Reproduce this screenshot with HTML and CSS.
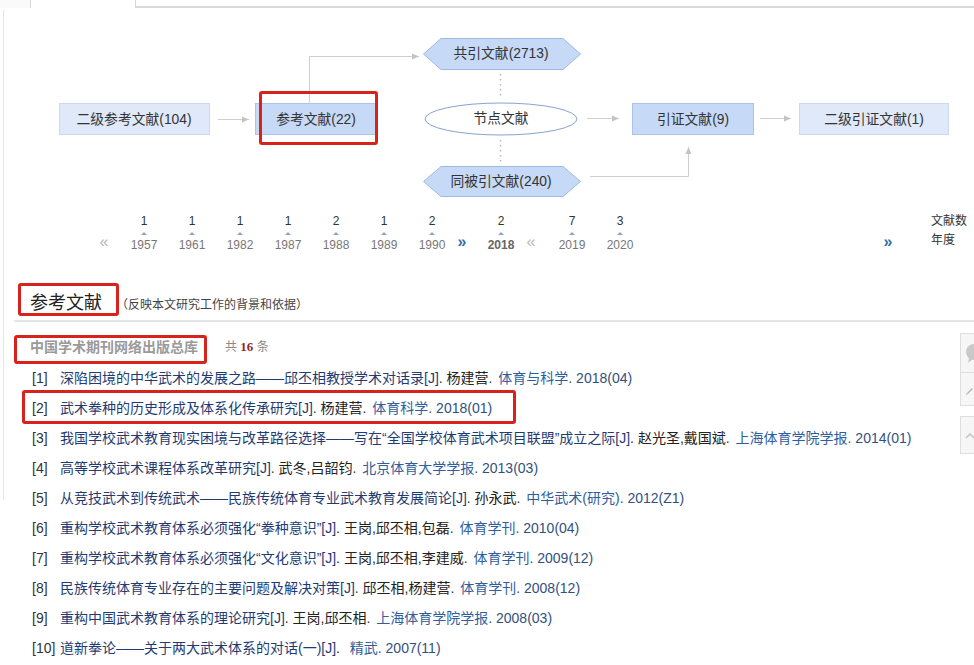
FILE: index.html
```html
<!DOCTYPE html>
<html lang="zh-CN">
<head>
<meta charset="utf-8">
<title>参考文献</title>
<link rel="stylesheet" href="styles.css">
</head>
<body>
<div class="page">
  <div class="tabs">
    <div class="tab-left"></div>
    <div class="tab-active"></div>
    <div class="tab-rest"></div>
  </div>
  <div class="left-edge"></div>

  <div class="diagram">
    <svg class="diagram-svg" width="974" height="197" viewBox="0 8 974 197">
      <defs>
        <marker id="ah" markerWidth="8" markerHeight="8" refX="7" refY="4" orient="auto" markerUnits="userSpaceOnUse">
          <path d="M0,1 L7,4 L0,7 Z" fill="#c4c4c4"/>
        </marker>
      </defs>
      <g fill="none" stroke="#cfcfcf" stroke-width="1">
        <line x1="218" y1="119.5" x2="249" y2="119.5" marker-end="url(#ah)"/>
        <polyline points="309.5,103 309.5,56.5 419,56.5" marker-end="url(#ah)"/>
        <line x1="587" y1="118.5" x2="619" y2="118.5" marker-end="url(#ah)"/>
        <line x1="760" y1="118.5" x2="791" y2="118.5" marker-end="url(#ah)"/>
        <polyline points="590,176.5 688.5,176.5 688.5,147" marker-end="url(#ah)"/>
      </g>
      <g stroke="#b9b9b9" stroke-width="1.5" stroke-dasharray="1.5 3.5">
        <line x1="500.5" y1="74" x2="500.5" y2="98"/>
        <line x1="500.5" y1="140" x2="500.5" y2="163"/>
      </g>
      <rect x="59.5" y="103.5" width="150" height="31" fill="#dfe9fa" stroke="#cbd9f0"/>
      <rect x="255.5" y="103.5" width="121" height="31" fill="#c6d9f6" stroke="#adc4ea"/>
      <polygon points="423.5,54 441,38.5 563,38.5 580.5,54 563,69.5 441,69.5" fill="#c6d9f6" stroke="#9fb9e2"/>
      <ellipse cx="501" cy="119" rx="76" ry="16" fill="#ffffff" stroke="#86a3cf"/>
      <rect x="632.5" y="103.5" width="121" height="31" fill="#c6d9f6" stroke="#adc4ea"/>
      <rect x="799.5" y="103.5" width="149" height="31" fill="#dfe9fa" stroke="#cbd9f0"/>
      <polygon points="423.5,181.5 441,166.5 563,166.5 580.5,181.5 563,196.5 441,196.5" fill="#c6d9f6" stroke="#9fb9e2"/>
      <g class="node-text" text-anchor="middle">
        <text x="134" y="124">二级参考文献(104)</text>
        <text x="316" y="124">参考文献(22)</text>
        <text x="501" y="58">共引文献(2713)</text>
        <text x="501" y="123">节点文献</text>
        <text x="693" y="124">引证文献(9)</text>
        <text x="874" y="124">二级引证文献(1)</text>
        <text x="501" y="186">同被引文献(240)</text>
      </g>
    </svg>
  </div>

  <div class="timeline">
    <span class="nav nav-prev first">«</span>
    <div class="year-col first-col"><span class="cnt">1</span><i class="tri"></i><span class="yr">1957</span></div>
    <div class="year-col"><span class="cnt">1</span><i class="tri"></i><span class="yr">1961</span></div>
    <div class="year-col"><span class="cnt">1</span><i class="tri"></i><span class="yr">1982</span></div>
    <div class="year-col"><span class="cnt">1</span><i class="tri"></i><span class="yr">1987</span></div>
    <div class="year-col"><span class="cnt">2</span><i class="tri"></i><span class="yr">1988</span></div>
    <div class="year-col"><span class="cnt">1</span><i class="tri"></i><span class="yr">1989</span></div>
    <div class="year-col"><span class="cnt">2</span><i class="tri"></i><span class="yr">1990</span></div>
    <span class="nav nav-next">»</span>
    <div class="year-col col-2018"><span class="cnt">2</span><i class="tri"></i><span class="yr bold">2018</span></div>
    <span class="nav nav-prev mid">«</span>
    <div class="year-col col-2019"><span class="cnt">7</span><i class="tri"></i><span class="yr">2019</span></div>
    <div class="year-col"><span class="cnt">3</span><i class="tri"></i><span class="yr">2020</span></div>
    <span class="nav nav-next end">»</span>
    <div class="legend"><span>文献数</span><span>年度</span></div>
  </div>

  <div class="section-head">
    <h2>参考文献</h2>
    <span class="sub">（反映本文研究工作的背景和依据）</span>
  </div>

  <div class="db-row">
    <span class="db-name">中国学术期刊网络出版总库</span>
    <span class="db-count">共 <b>16</b> 条</span>
  </div>

  <ol class="refs">
    <li><span class="no">[1]</span><span class="t">深陷困境的中华武术的发展之路——邱丕相教授学术对话录[J]</span>. <span class="a">杨建营</span>. <span class="j">体育与科学</span><span class="y">. 2018(04)</span></li>
    <li><span class="no">[2]</span><span class="t">武术拳种的历史形成及体系化传承研究[J]</span>. <span class="a">杨建营</span>. <span class="j">体育科学</span><span class="y">. 2018(01)</span></li>
    <li><span class="no">[3]</span><span class="t">我国学校武术教育现实困境与改革路径选择——写在“全国学校体育武术项目联盟”成立之际[J]</span>. <span class="a">赵光圣,戴国斌</span>. <span class="j">上海体育学院学报</span><span class="y">. 2014(01)</span></li>
    <li><span class="no">[4]</span><span class="t">高等学校武术课程体系改革研究[J]</span>. <span class="a">武冬,吕韶钧</span>. <span class="j">北京体育大学学报</span><span class="y">. 2013(03)</span></li>
    <li><span class="no">[5]</span><span class="t">从竞技武术到传统武术——民族传统体育专业武术教育发展简论[J]</span>. <span class="a">孙永武</span>. <span class="j">中华武术(研究)</span><span class="y">. 2012(Z1)</span></li>
    <li><span class="no">[6]</span><span class="t">重构学校武术教育体系必须强化“拳种意识”[J]</span>. <span class="a">王岗,邱丕相,包磊</span>. <span class="j">体育学刊</span><span class="y">. 2010(04)</span></li>
    <li><span class="no">[7]</span><span class="t">重构学校武术教育体系必须强化“文化意识”[J]</span>. <span class="a">王岗,邱丕相,李建威</span>. <span class="j">体育学刊</span><span class="y">. 2009(12)</span></li>
    <li><span class="no">[8]</span><span class="t">民族传统体育专业存在的主要问题及解决对策[J]</span>. <span class="a">邱丕相,杨建营</span>. <span class="j">体育学刊</span><span class="y">. 2008(12)</span></li>
    <li><span class="no">[9]</span><span class="t">重构中国武术教育体系的理论研究[J]</span>. <span class="a">王岗,邱丕相</span>. <span class="j">上海体育学院学报</span><span class="y">. 2008(03)</span></li>
    <li><span class="no">[10]</span><span class="t">道新拳论——关于两大武术体系的对话(一)[J]</span>. &nbsp;<span class="j">精武</span><span class="y">. 2007(11)</span></li>
  </ol>

  <div class="side-tools">
    <div class="tool tool-a"><svg width="14" height="22" viewBox="0 0 14 22"><circle cx="11" cy="10" r="8" fill="#c9c9c9"/><path d="M6,16 L5,21 L10,17 Z" fill="#c9c9c9"/></svg></div>
    <div class="tool tool-b"><svg width="14" height="14" viewBox="0 0 14 14"><path d="M4,11 L9,6 L10,7 L5,12 Z" fill="#b5b5b5"/><path d="M3,12 L4,11 L5,12 L3,13 Z" fill="#b5b5b5"/></svg></div>
    <div class="tool tool-c"><svg width="14" height="14" viewBox="0 0 14 14"><path d="M3,10 L7,6 L11,10" fill="none" stroke="#c3c3c3" stroke-width="1.5"/></svg></div>
  </div>

  <div class="mark mark-node"></div>
  <div class="mark mark-head"></div>
  <div class="mark mark-db"></div>
  <div class="mark mark-item"></div>
</div>
</body>
</html>
```
FILE: styles.css
```css
html, body {
  margin: 0;
  padding: 0;
  background: #ffffff;
}
body {
  font-family: "Liberation Sans", "Noto Sans CJK SC", sans-serif;
  color: #333;
  font-size: 13px;
  overflow: hidden;
}
.page {
  position: relative;
  width: 974px;
  height: 665px;
  overflow: hidden;
}

/* top tab strip */
.tabs {
  display: flex;
  height: 8px;
}
.tab-left {
  width: 30px;
  border-right: 1px solid #d6d6d6;
  background: #fafafa;
}
.tab-active {
  width: 104px;
  border-right: 1px solid #d6d6d6;
}
.tab-rest {
  flex: 1;
  border-bottom: 2px solid #dadada;
}
.left-edge {
  position: absolute;
  left: 3px;
  top: 10px;
  width: 1px;
  height: 490px;
  background: #e4e4e4;
}

/* relation diagram */
.diagram {
  position: relative;
  height: 197px;
}
.diagram-svg {
  display: block;
}
.node-text text {
  font-family: "Liberation Sans", "Noto Sans CJK SC", sans-serif;
  font-size: 13.8px;
  fill: #333;
}

/* year timeline */
.timeline {
  display: flex;
  align-items: flex-start;
  height: 79px;
  padding-left: 92px;
}
.year-col {
  width: 48px;
  display: flex;
  flex-direction: column;
  align-items: center;
  padding-top: 8px;
}
.first-col { margin-left: 4px; }
.col-2018 { margin-left: 9px; }
.col-2019 { margin-left: 11px; }
.cnt {
  font-size: 12px;
  line-height: 16px;
  color: #333;
}
.tri {
  display: block;
  width: 0;
  height: 0;
  margin: 3px 0 2px;
  border-left: 3px solid transparent;
  border-right: 3px solid transparent;
  border-bottom: 3px solid #8ea4cc;
}
.yr {
  font-size: 12px;
  line-height: 16px;
  color: #777;
}
.yr.bold {
  font-weight: bold;
  color: #666;
}
.nav {
  display: block;
  width: 12px;
  text-align: center;
  margin-top: 29px;
  font-size: 16px;
  line-height: 16px;
  font-weight: bold;
}
.nav-prev { color: #b8b8b8; font-weight: normal; }
.nav-prev.first { width: 24px; }
.nav-next { color: #2f6fa8; }
.nav-next.end { margin-left: 238px; }
.legend {
  display: flex;
  flex-direction: column;
  margin-left: 37px;
  padding-top: 7px;
  font-size: 12px;
  line-height: 19px;
  color: #333;
}

/* section heading */
.section-head {
  display: flex;
  align-items: flex-end;
  margin-left: 14px;
  padding-left: 16px;
  padding-bottom: 5px;
  height: 31px;
  border-bottom: 2px solid #e6e6e6;
}
.section-head h2 {
  margin: 0;
  font-size: 18px;
  line-height: 24px;
  font-weight: normal;
  color: #222;
}
.sub {
  font-size: 12px;
  line-height: 20px;
  color: #444;
  margin-left: 14px;
}

.db-row {
  display: flex;
  align-items: center;
  height: 24px;
  margin-top: 12px;
  padding-left: 30px;
}
.db-name {
  font-size: 14px;
  font-weight: bold;
  color: #9a9a9a;
}
.db-count {
  margin-left: 27px;
  font-size: 12px;
  color: #8a8a8a;
}
.db-count b {
  color: #8e2a2a;
  font-family: "Liberation Serif", serif;
  font-size: 13px;
}

/* reference list */
.refs {
  list-style: none;
  margin: 5px 0 0;
  padding: 0 0 0 32px;
}
.refs li {
  display: block;
  white-space: nowrap;
  height: 30px;
  line-height: 30px;
  font-size: 14px;
  color: #333;
}
.refs .no {
  display: inline-block;
  width: 28px;
  color: #333;
}
.refs .t { color: #1f3c72; }
.refs .a { color: #222; }
.refs .j { color: #2e5e9e; margin-left: 2px; }
.refs .y { color: #32507e; }

/* floating tool buttons */
.side-tools {
  position: absolute;
  left: 960px;
  top: 333px;
  display: flex;
  flex-direction: column;
}
.tool {
  width: 30px;
  border: 1px solid #dedede;
  background: #f6f6f6;
  display: flex;
  align-items: center;
  padding-left: 2px;
}
.tool-a { height: 38px; }
.tool-b { height: 32px; border-top: none; }
.tool-c { height: 36px; margin-top: 10px; }

/* red annotation boxes */
.mark {
  position: absolute;
  border: 3px solid #d8231c;
  border-radius: 3px;
  box-sizing: border-box;
}
.mark-node { left: 259px; top: 91px; width: 119px; height: 54px; }
.mark-head { left: 18px; top: 283px; width: 101px; height: 33px; }
.mark-db { left: 14px; top: 335px; width: 193px; height: 29px; }
.mark-item { left: 22px; top: 390px; width: 494px; height: 34px; }
```
